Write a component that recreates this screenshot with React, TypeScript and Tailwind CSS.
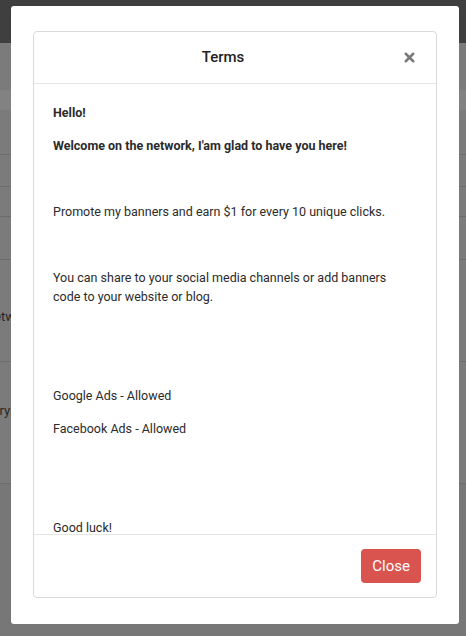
import { X } from "lucide-react";

const paragraphs: { text: string; bold?: boolean }[] = [
  { text: "Hello!", bold: true },
  { text: "Welcome on the network, I'am glad to have you here!", bold: true },
  { text: "\u00a0" },
  { text: "Promote my banners and earn $1 for every 10 unique clicks." },
  { text: "\u00a0" },
  {
    text: "You can share to your social media channels or add banners code to your website or blog.",
  },
  { text: "\u00a0" },
  { text: "\u00a0" },
  { text: "Google Ads - Allowed" },
  { text: "Facebook Ads - Allowed" },
  { text: "\u00a0" },
  { text: "\u00a0" },
  { text: "Good luck!" },
  { text: "\u00a0" },
];

function Backdrop() {
  return (
    <div className="flex h-[636px] w-[466px] flex-col bg-[#7b7b7b] text-[13px] text-[#262626]">
      <div className="h-[43px] bg-[#3f3f3f]" />
      <div className="h-[47px]" />
      <div className="h-[20px] bg-[#828282]" />
      <div className="flex h-[45px] items-center justify-end border-b border-[#6c6c6c]">
        <span className="-mr-[38px] font-bold">grade</span>
      </div>
      <div className="h-[32px] border-b border-[#6c6c6c]" />
      <div className="h-[30px] border-b border-[#6c6c6c]" />
      <div className="h-[43px] border-b border-[#6c6c6c]" />
      <div className="flex h-[102px] items-center border-b border-[#6c6c6c]">
        <span className="-ml-[13px] pt-[13px]">network</span>
      </div>
      <div className="flex h-[122px] items-center border-b border-[#6c6c6c]">
        <span className="-ml-[9px] -mt-[24px]">Crypto</span>
      </div>
      <div className="flex-1 bg-[#777777]" />
    </div>
  );
}

export default function App() {
  return (
    <div
      className="relative h-[636px] w-[466px] overflow-hidden"
      style={{ fontFamily: "Roboto, 'Liberation Sans', sans-serif" }}
    >
      <Backdrop />

      <div className="absolute left-[11px] top-[6px] flex h-[618px] w-[448px] flex-col rounded-[3px] bg-white px-[22px] pb-[26px] pt-[25px]">
        <div className="flex h-[567px] flex-col rounded-[4px] border border-[#d9d9d9]">
          <div className="flex h-[52px] shrink-0 items-center border-b border-[#e5e5e5] pl-[16px] pr-[14px]">
            <h4 className="flex-1 text-center text-[15px] font-medium text-[#222]">
              Terms
            </h4>
            <button className="flex h-[26px] w-[26px] items-center justify-center text-[#7a7a7a]">
              <X size={15} strokeWidth={4} />
            </button>
          </div>

          <div className="h-[450px] overflow-hidden pl-[19px] pr-[26px] pt-[19px] text-[12.5px] leading-[19px] text-[#2b2b2b]">
            {paragraphs.map((p, i) => (
              <p key={i} className={p.bold ? "mb-[14px] font-bold" : "mb-[14px]"}>
                {p.text}
              </p>
            ))}
          </div>

          <div className="flex flex-1 items-center justify-end border-t border-[#e5e5e5] px-[15px]">
            <button className="h-[34px] rounded-[4px] bg-[#d9534f] px-[11px] text-[15px] text-white">
              Close
            </button>
          </div>
        </div>
      </div>
    </div>
  );
}
